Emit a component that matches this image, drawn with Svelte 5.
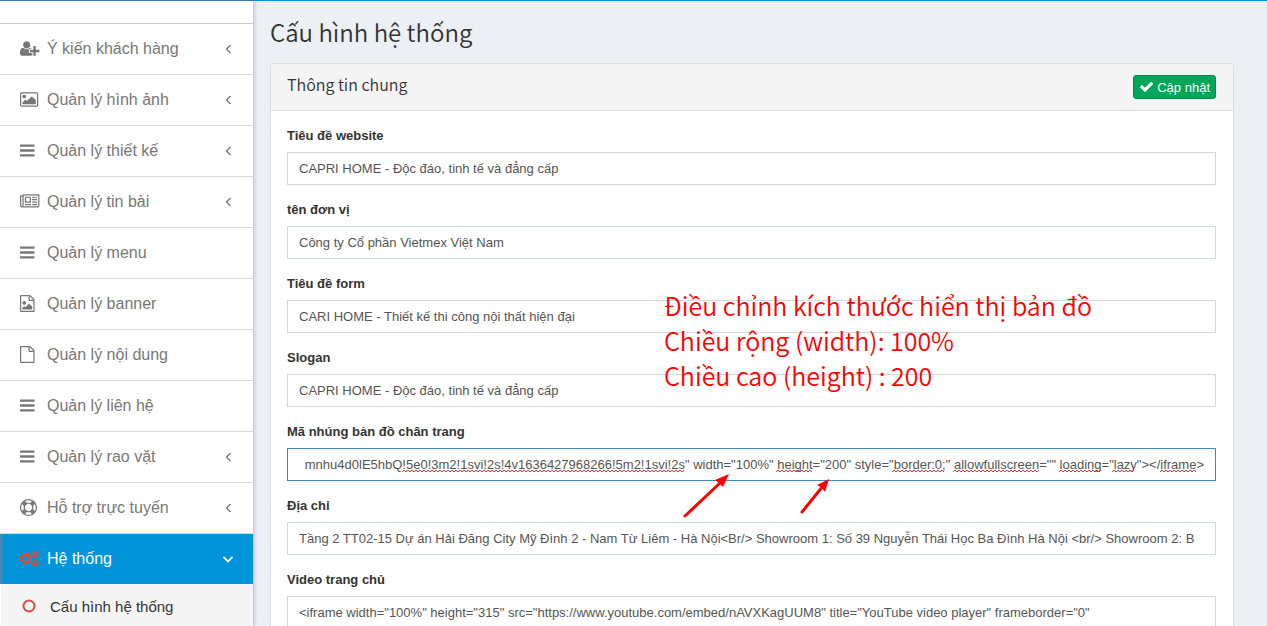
<script>
  import { onMount } from 'svelte';

  const icons = {
    userPlus: {
      box: '0 0 2048 1792',
      d: 'M704 896q-159 0-271.5-112.5t-112.5-271.5 112.5-271.5 271.5-112.5 271.5 112.5 112.5 271.5-112.5 271.5-271.5 112.5zm960 128h352q13 0 22.5 9.5t9.5 22.5v192q0 13-9.5 22.5t-22.5 9.5h-352v352q0 13-9.5 22.5t-22.5 9.5h-192q-13 0-22.5-9.5t-9.5-22.5v-352h-352q-13 0-22.5-9.5t-9.5-22.5v-192q0-13 9.5-22.5t22.5-9.5h352v-352q0-13 9.5-22.5t22.5-9.5h192q13 0 22.5 9.5t9.5 22.5v352zm-736 224q0 52 38 90t90 38h256v238q-68 50-171 50h-874q-121 0-194-69t-73-190q0-53 3.5-103.5t14-109 26.5-108.5 43-97.5 62-81 85.5-53.5 111.5-20q19 0 39 17 79 61 154.5 91.5t164.5 30.5 164.5-30.5 154.5-91.5q20-17 39-17 132 0 217 96h-223q-52 0-90 38t-38 90v192z'
    },
    picture: {
      box: '-64 0 1920 1792',
      d: 'M576 576q0 80-56 136t-136 56-136-56-56-136 56-136 136-56 136 56 56 136zm1024 384v448h-1408v-192l320-320 160 160 512-512zm96-704h-1600q-13 0-22.5 9.5t-9.5 22.5v1216q0 13 9.5 22.5t22.5 9.5h1600q13 0 22.5-9.5t9.5-22.5v-1216q0-13-9.5-22.5t-22.5-9.5zm160 32v1216q0 66-47 113t-113 47h-1600q-66 0-113-47t-47-113v-1216q0-66 47-113t113-47h1600q66 0 113 47t47 113z'
    },
    bars: {
      box: '128 0 1536 1792',
      d: 'M192 256h1408q64 0 64 64v128q0 64-64 64h-1408q-64 0-64-64v-128q0-64 64-64zm0 512h1408q64 0 64 64v128q0 64-64 64h-1408q-64 0-64-64v-128q0-64 64-64zm0 512h1408q64 0 64 64v128q0 64-64 64h-1408q-64 0-64-64v-128q0-64 64-64z'
    },
    news: {
      box: '0 0 2048 1792',
      d: 'M1024 512h-384v384h384v-384zm128 640v128h-640v-128h640zm0-768v640h-640v-640h640zm640 768v128h-512v-128h512zm0-256v128h-512v-128h512zm0-256v128h-512v-128h512zm0-256v128h-512v-128h512zm-1536 960v-960h-128v960q0 26 19 45t45 19 45-19 19-45zm1664 0v-1088h-1536v1088q0 33-11 64h1483q26 0 45-19t19-45zm128-1216v1216q0 80-56 136t-136 56h-1664q-80 0-136-56t-56-136v-1088h256v-128h1792z'
    },
    fileImage: {
      box: '128 0 1536 1792',
      d: 'M1596 380q28 28 48 76t20 88v1152q0 40-28 68t-68 28h-1344q-40 0-68-28t-28-68v-1600q0-40 28-68t68-28h896q40 0 88 20t76 48zm-444-244v376h376q-10-29-22-41l-313-313q-12-12-41-22zm384 1528v-1024h-416q-40 0-68-28t-28-68v-416h-768v1536h1280zm-128-448v320h-1024v-192l192-192 128 128 384-384zm-832-192q-80 0-136-56t-56-136 56-136 136-56 136 56 56 136-56 136-136 56z'
    },
    file: {
      box: '128 0 1536 1792',
      d: 'M1596 380q28 28 48 76t20 88v1152q0 40-28 68t-68 28h-1344q-40 0-68-28t-28-68v-1600q0-40 28-68t68-28h896q40 0 88 20t76 48zm-444-244v376h376q-10-29-22-41l-313-313q-12-12-41-22zm384 1528v-1024h-416q-40 0-68-28t-28-68v-416h-768v1536h1280z'
    },
    ring: {
      box: '0 0 1792 1792',
      d: 'M896 0q182 0 348 71t286 191 191 286 71 348-71 348-191 286-286 191-348 71-348-71-286-191-191-286-71-348 71-348 191-286 286-191 348-71zm0 128q-190 0-361 90l194 194q82-28 167-28t167 28l194-194q-171-90-361-90zm-678 1129l194-194q-28-82-28-167t28-167l-194-194q-90 171-90 361t90 361zm678 407q190 0 361-90l-194-194q-82 28-167 28t-167-28l-194 194q171 90 361 90zm0-384q159 0 271.5-112.5t112.5-271.5-112.5-271.5-271.5-112.5-271.5 112.5-112.5 271.5 112.5 271.5 271.5 112.5zm484-217l194 194q90-171 90-361t-90-361l-194 194q28 82 28 167t-28 167z'
    }
  };

  const menu = [
    { text: 'Ý kiến khách hàng', icon: icons.userPlus, sub: true },
    { text: 'Quản lý hình ảnh', icon: icons.picture, sub: true },
    { text: 'Quản lý thiết kế', icon: icons.bars, sub: true },
    { text: 'Quản lý tin bài', icon: icons.news, sub: true },
    { text: 'Quản lý menu', icon: icons.bars },
    { text: 'Quản lý banner', icon: icons.fileImage },
    { text: 'Quản lý nội dung', icon: icons.file },
    { text: 'Quản lý liên hệ', icon: icons.bars },
    { text: 'Quản lý rao vặt', icon: icons.bars, sub: true },
    { text: 'Hỗ trợ trực tuyến', icon: icons.ring, sub: true }
  ];

  const fields = [
    { id: 'title', label: 'Tiêu đề website', value: 'CAPRI HOME - Độc đáo, tinh tế và đẳng cấp' },
    { id: 'company', label: 'tên đơn vị', value: 'Công ty Cổ phần Vietmex Việt Nam' },
    { id: 'form', label: 'Tiêu đề form', value: 'CARI HOME - Thiết kế thi công nội thất hiện đại' },
    { id: 'slogan', label: 'Slogan', value: 'CAPRI HOME - Độc đáo, tinh tế và đẳng cấp' },
    {
      id: 'map',
      label: 'Mã nhúng bản đồ chân trang',
      value: 'mnhu4d0lE5hbQ!5e0!3m2!1svi!2s!4v1636427968266!5m2!1svi!2s" width="100%" height="200" style="border:0;" allowfullscreen="" loading="lazy"></iframe>',
      active: true
    },
    {
      id: 'address',
      label: 'Địa chỉ',
      value: 'Tầng 2 TT02-15 Dự án Hải Đăng City Mỹ Đình 2 - Nam Từ Liêm - Hà Nội<Br/> Showroom 1: Số 39 Nguyễn Thái Học Ba Đình Hà Nội <br/> Showroom 2: B'
    },
    {
      id: 'video',
      label: 'Video trang chủ',
      value: '<iframe width="100%" height="315" src="https://www.youtube.com/embed/nAVXKagUUM8" title="YouTube video player" frameborder="0"'
    }
  ];

  // spell check marks: start and length inside the 904px text strip
  const marks = [
    [102, 283],
    [476, 36],
    [592, 53],
    [653, 86],
    [759, 42],
    [812, 23],
    [860, 36]
  ];

  function wave([x, w]) {
    let d = `M${x} 3`;
    for (let i = 2; i <= w; i += 2) d += `L${x + i} ${i % 4 ? 1 : 3}`;
    return d;
  }

  onMount(() => {
    const map = document.getElementById('map');
    map.scrollLeft = map.scrollWidth;
  });
</script>

<div class="page">
  <nav class="sidebar">
    <ul>
      <li class="cut"></li>
      {#each menu as item}
        <li>
          <a href="#menu">
            <svg class="icon" viewBox={item.icon.box} preserveAspectRatio="xMinYMid meet"><path d={item.icon.d} /></svg>
            <span>{item.text}</span>
            {#if item.sub}
              <svg class="angle" viewBox="0 0 10 10"><path d="M7.500 1L3.500 5l4 4" /></svg>
            {/if}
          </a>
        </li>
      {/each}
      <li class="open">
        <a href="#system">
          <svg class="icon cogs" viewBox="0 0 20 17">
            <circle cx="6" cy="8.500" r="3.800" stroke-width="2.400" />
            <circle cx="6" cy="8.500" r="5.400" stroke-width="1.600" stroke-dasharray="2.120 2.120" />
            <circle cx="15" cy="4" r="2" stroke-width="1.300" />
            <circle cx="15" cy="4" r="3.100" stroke-width="1.200" stroke-dasharray="1.217 1.217" />
            <circle cx="15" cy="13" r="2" stroke-width="1.300" />
            <circle cx="15" cy="13" r="3.100" stroke-width="1.200" stroke-dasharray="1.217 1.217" />
          </svg>
          <span>Hệ thống</span>
          <svg class="angle" viewBox="0 0 10 10"><path d="M0.500 3L5 7.500 9.500 3" /></svg>
        </a>
        <a class="child" href="#config">
          <svg class="dot" viewBox="0 0 14 14"><circle cx="7" cy="7" r="5.500" /></svg>
          <span>Cấu hình hệ thống</span>
        </a>
      </li>
    </ul>
  </nav>

  <main>
    <h1>Cấu hình hệ thống</h1>
    <form class="panel">
      <header>
        <h2>Thông tin chung</h2>
        <button type="button">
          <svg viewBox="121 340 1550 1188"><path d="M1671 566q0 40-28 68l-724 724-136 136q-28 28-68 28t-68-28l-136-136-362-362q-28-28-28-68t28-68l136-136q28-28 68-28t68 28l294 295 656-657q28-28 68-28t68 28l136 136q28 28 28 68z" /></svg>
          Cập nhật
        </button>
      </header>
      <div class="body">
        {#each fields as field}
          <div class="group">
            <label for={field.id}>{field.label}</label>
            <div class="control">
              <input id={field.id} class:active={field.active} type="text" value={field.value} spellcheck="false" />
              {#if field.active}
                <svg class="marks" viewBox="0 0 904 4">
                  {#each marks as mark}<path d={wave(mark)} />{/each}
                </svg>
              {/if}
            </div>
          </div>
        {/each}
        <p class="note">
          Điều chỉnh kích thước hiển thị bản đồ<br />
          Chiều rộng (width): 100%<br />
          Chiều cao (height) : 200
        </p>
        <svg class="arrows" viewBox="0 0 150 48">
          <path class="line" d="M3 44L38 11M120 40L141 14" />
          <path d="M47 2L41 15 38 12 33 8zM147 7L143 20 140 16 135 13z" />
        </svg>
      </div>
    </form>
  </main>
</div>

<style>
  :global(body) {
    background: #ecf0f5;
  }
  .page {
    display: flex;
    height: 100vh;
    overflow: hidden;
    font-family: "Liberation Sans", Arial, sans-serif;
    background: #ecf0f5;
    color: #333;
  }
  .sidebar {
    flex: 0 0 253px;
    border-top: 1px solid #3c7dac;
    background: #fff;
    box-shadow: 1px 0 4px #c9a9cc;
  }
  ul {
    list-style: none;
    margin: 0;
    padding: 0;
  }
  li {
    border-bottom: 1px solid #d8d8d8;
  }
  .cut {
    height: 22px;
    border-color: #c8c8c8;
  }
  .sidebar a {
    display: flex;
    align-items: center;
    box-sizing: border-box;
    height: 50px;
    padding: 0 20px;
    color: #777;
    font-size: 16px;
    text-decoration: none;
  }
  .sidebar span {
    flex: 1;
  }
  .icon {
    width: 20px;
    height: 17px;
    margin: 0 7px 2px 0;
    fill: #777;
  }
  .angle {
    width: 10px;
    height: 10px;
    fill: none;
    stroke: #777;
    stroke-width: 1.4;
  }
  .sidebar .open > a:first-child {
    background: #0095da;
    border-left: 3px solid #3c8dbc;
    padding-left: 17px;
    color: #fff;
  }
  .open .angle {
    stroke: #fff;
    stroke-width: 1.8;
  }
  .sidebar .cogs {
    fill: none;
    stroke: #dd4b39;
  }
  .sidebar .child {
    background: #f4f4f4;
    border-left: 1px solid #fff;
    height: 44px;
    padding-left: 21px;
    color: #333;
    font-size: 15px;
  }
  .dot {
    width: 14px;
    height: 14px;
    margin-right: 14px;
    fill: none;
    stroke: #dd4b39;
    stroke-width: 2;
  }
  main {
    flex: 1;
    min-width: 0;
    padding: 15px 33px 0 17px;
    border-top: 1px solid #0095da;
  }
  h1,
  h2 {
    margin: 0;
    font-family: "Noto Sans CJK SC", sans-serif;
    font-weight: 350;
  }
  h1 {
    font-size: 24px;
    line-height: 32px;
    margin-bottom: 15px;
  }
  .panel {
    background: #fff;
    border: 1px solid #ddd;
    border-radius: 4px;
  }
  header {
    display: flex;
    justify-content: space-between;
    align-items: center;
    height: 46px;
    padding: 0 17px 0 16px;
    background: #f4f4f4;
    border-bottom: 1px solid #ddd;
    border-radius: 3px 3px 0 0;
  }
  h2 {
    font-size: 16px;
    line-height: 20px;
    margin-bottom: 6px;
  }
  button {
    display: flex;
    align-items: center;
    gap: 4px;
    height: 24px;
    padding: 0 5px 0 6px;
    background: #00a65a;
    border: 1px solid #008d4c;
    border-radius: 3px;
    color: #fff;
    font: 13px "Liberation Sans", Arial, sans-serif;
  }
  button svg {
    width: 13px;
    height: 10px;
    fill: #fff;
  }
  .body {
    position: relative;
    padding: 15px 17px 0 16px;
  }
  .group {
    margin-bottom: 15px;
  }
  label {
    display: block;
    height: 20px;
    margin-bottom: 6px;
    font-size: 13px;
    font-weight: 700;
    line-height: 20px;
  }
  .control {
    position: relative;
  }
  input {
    display: block;
    box-sizing: border-box;
    width: 100%;
    height: 33px;
    padding: 0 11px;
    border: 1px solid #d2d6de;
    border-radius: 0;
    background: #fff;
    color: #555;
    font: 13px "Liberation Sans", Arial, sans-serif;
  }
  input.active {
    border-color: #3c8dbc;
    text-align: right;
  }
  .marks {
    position: absolute;
    right: 12px;
    bottom: 8px;
    width: 904px;
    height: 4px;
    fill: none;
    stroke: #e33;
  }
  .note {
    position: absolute;
    top: 177px;
    left: 393px;
    margin: 0;
    color: #f00;
    font: 350 25px/35px "Noto Sans CJK SC", sans-serif;
  }
  .arrows {
    position: absolute;
    top: 361px;
    left: 411px;
    width: 150px;
    height: 48px;
    fill: #f00;
  }
  .line {
    stroke: #f00;
    stroke-width: 3;
    stroke-linecap: round;
  }
</style>
